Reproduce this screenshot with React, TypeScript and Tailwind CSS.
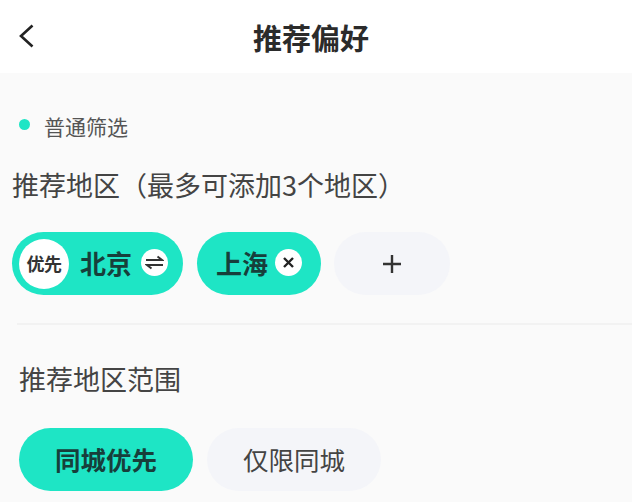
import React from "react";

const font = { fontFamily: '"Noto Sans CJK SC", "Noto Sans", sans-serif' };

const App = () => {
  return (
    <div className="h-[502px] w-[632px] overflow-hidden bg-[#fafafa]" style={font}>
      <header className="relative flex h-[73px] items-center justify-center bg-white pr-[10px] pt-[2px]">
        <svg
          className="absolute left-[18px] top-[24px]"
          width="16"
          height="24"
          viewBox="0 0 16 24"
          fill="none"
          stroke="#222"
          strokeWidth="2.6"
        >
          <path d="M14.5 1.5 L3 12 L14.5 22.5" />
        </svg>
        <h1 className="text-[29px] font-bold leading-none text-[#2b2b2b]">推荐偏好</h1>
      </header>

      <main className="flex flex-col">
        <div className="ml-[19px] mt-[40px] flex h-[26px] items-center gap-[14px]">
          <span className="size-[11px] -translate-y-[2px] rounded-full bg-[#1ee5c5]" />
          <span className="text-[21px] leading-none text-[#555]">普通筛选</span>
        </div>

        <p className="ml-[12px] mt-[28px] whitespace-nowrap text-[27px] leading-[36px] text-[#444]">
          推荐地区（最多可添加3个地区）
        </p>

        <div className="ml-[12px] mt-[29px] flex gap-[14px]">
          <div className="flex h-[63px] w-[171px] items-center rounded-full bg-[#1ee5c5] pl-[7px]">
            <span className="flex size-[50px] items-center justify-center rounded-full bg-white text-[18px] font-bold tracking-[-0.5px] text-[#333]">
              优先
            </span>
            <span className="ml-[11px] -translate-y-[1px] text-[26px] font-bold leading-none text-[#173f3b]">北京</span>
            <span className="ml-[9px] flex size-[27px] -translate-y-[1px] items-center justify-center rounded-full bg-white">
              <svg width="19" height="15" viewBox="0 0 19 15" fill="none" stroke="#333" strokeWidth="1.9">
                <path d="M1 5 H17 L12.5 1.5" />
                <path d="M18 10 H2 L6.5 13.5" />
              </svg>
            </span>
          </div>

          <div className="flex h-[63px] w-[124px] items-center rounded-full bg-[#1ee5c5] pl-[19px]">
            <span className="-translate-y-[1px] text-[26px] font-bold leading-none text-[#173f3b]">上海</span>
            <span className="ml-[7px] flex size-[27px] -translate-y-[1px] items-center justify-center rounded-full bg-white">
              <svg width="13" height="13" viewBox="0 0 13 13" fill="none" stroke="#222" strokeWidth="2.4">
                <path d="M2 2 L11 11 M11 2 L2 11" />
              </svg>
            </span>
          </div>

          <div className="-ml-px flex h-[63px] w-[116px] items-center justify-center rounded-full bg-[#f4f5f9]">
            <svg width="20" height="20" viewBox="0 0 20 20" fill="none" stroke="#333" strokeWidth="2.4">
              <path d="M10 1 V19 M1 10 H19" />
            </svg>
          </div>
        </div>

        <div className="ml-[17px] mt-[28px] h-[1.5px] bg-[#f2f2f2]" />

        <p className="ml-[19px] mt-[36px] text-[27px] leading-[36px] text-[#444]">推荐地区范围</p>

        <div className="ml-[19px] mt-[31px] flex gap-[14px]">
          <div className="flex h-[63px] w-[174px] items-center justify-center rounded-full bg-[#1ee5c5] text-[25.5px] font-bold text-[#173f3b]">
            同城优先
          </div>
          <div className="flex h-[63px] w-[174px] items-center justify-center rounded-full bg-[#f4f5f9] text-[25.5px] text-[#444]">
            仅限同城
          </div>
        </div>
      </main>
    </div>
  );
};

export default App;
